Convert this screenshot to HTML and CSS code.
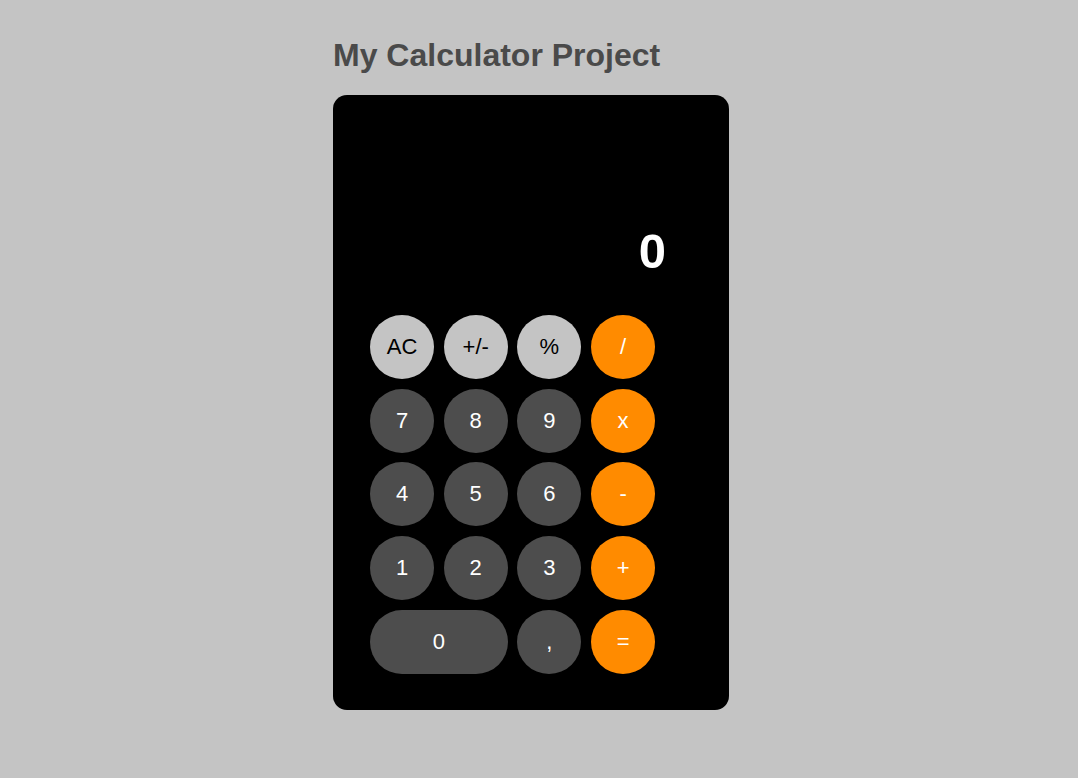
FILE: index.html
```html
<!DOCTYPE html>
<html>
<head>
<meta charset="utf-8">
<title>My Calculator Project</title>
<link rel="stylesheet" href="styles.css">
</head>
<body>
<div class="wrap">
  <h1 class="title">My Calculator Project</h1>
  <div class="calc">
    <div class="display">0</div>
    <div class="keys">
      <button class="key light">AC</button>
      <button class="key light">+/-</button>
      <button class="key light">%</button>
      <button class="key op">/</button>
      <button class="key">7</button>
      <button class="key">8</button>
      <button class="key">9</button>
      <button class="key op">x</button>
      <button class="key">4</button>
      <button class="key">5</button>
      <button class="key">6</button>
      <button class="key op">-</button>
      <button class="key">1</button>
      <button class="key">2</button>
      <button class="key">3</button>
      <button class="key op">+</button>
      <button class="key zero">0</button>
      <button class="key">,</button>
      <button class="key op">=</button>
    </div>
  </div>
</div>
</body>
</html>
```

FILE: styles.css
```css
html, body {
  margin: 0;
  padding: 0;
}
body {
  background: #c4c4c4;
  font-family: "Liberation Sans", Arial, Helvetica, sans-serif;
  min-height: 778px;
}
.wrap {
  width: 412px;
  margin: 0 auto;
  padding-top: 37px;
}
.title {
  margin: 0 0 21px 0;
  font-size: 32px;
  line-height: 37px;
  font-weight: bold;
  color: #4a4a4a;
}
.calc {
  width: 396px;
  box-sizing: border-box;
  background: #000;
  border-radius: 14px;
  padding: 0 37px 36px 37px;
}
.display {
  padding-top: 127px;
  padding-right: 26px;
  margin-bottom: 35px;
  text-align: right;
  color: #fff;
  font-size: 49px;
  line-height: 58px;
  font-weight: bold;
}
.keys {
  display: grid;
  grid-template-columns: repeat(4, 64px);
  grid-auto-rows: 64px;
  gap: 9.7px;
}
.key {
  border: none;
  margin: 0;
  padding: 0;
  border-radius: 32px;
  background: #4d4d4d;
  color: #fff;
  font-family: "Liberation Sans", Arial, Helvetica, sans-serif;
  font-size: 22px;
  line-height: 64px;
}
.key.light {
  background: #c4c4c4;
  color: #000;
}
.key.op {
  background: #ff8b00;
  color: #fff;
}
.key.zero {
  grid-column: span 2;
}
```
